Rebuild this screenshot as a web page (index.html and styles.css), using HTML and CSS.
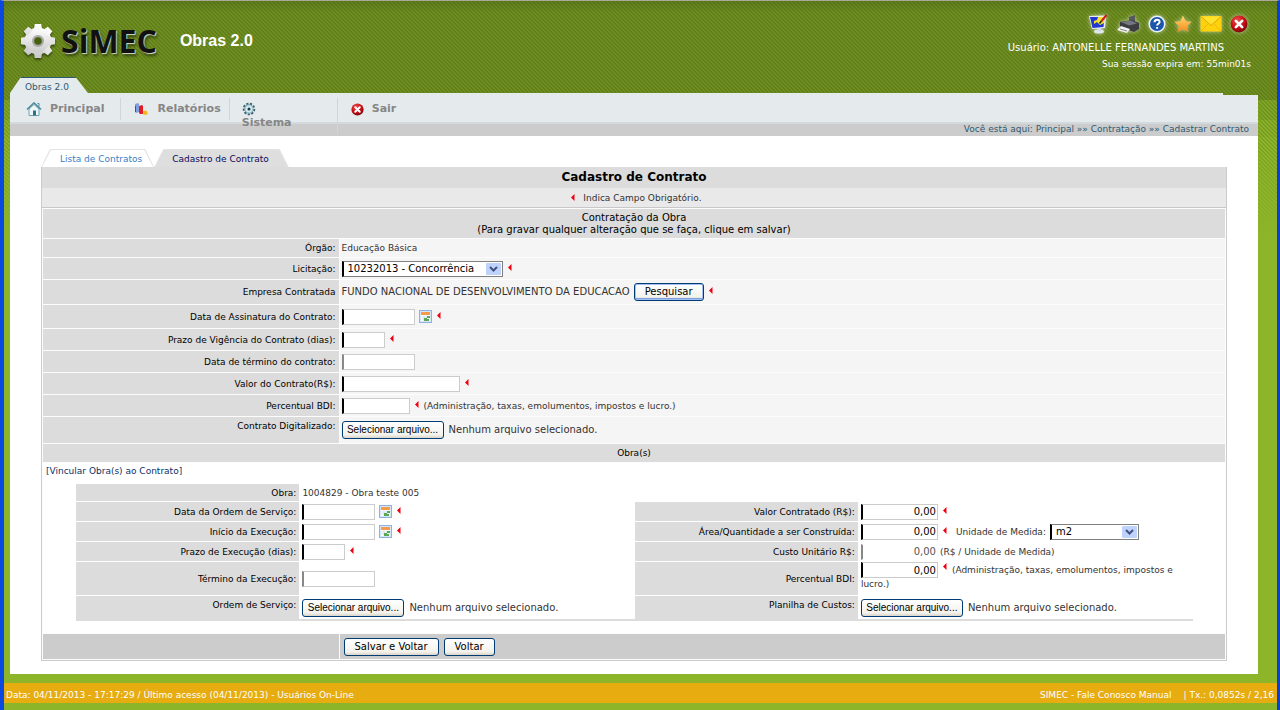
FILE: index.html
```html
<!DOCTYPE html>
<html lang="pt-BR">
<head>
<meta charset="utf-8">
<title>SIMEC - Cadastro de Contrato</title>
<link rel="stylesheet" href="styles.css">
</head>
<body>
<svg class="defs" aria-hidden="true">
  <defs>
    <radialGradient id="redball" cx=".4" cy=".3" r=".7"><stop offset="0" stop-color="#f05050"/><stop offset=".6" stop-color="#c80f14"/><stop offset="1" stop-color="#7d0508"/></radialGradient>
    <linearGradient id="silver" x1="0" y1="0" x2="0" y2="1"><stop offset="0" stop-color="#ffffff"/><stop offset="1" stop-color="#c8c8c8"/></linearGradient>
    <linearGradient id="gold" x1="0" y1="0" x2="0" y2="1"><stop offset="0" stop-color="#ffd968"/><stop offset="1" stop-color="#f58a1c"/></linearGradient>
    <symbol id="req" viewBox="0 0 4 7"><path d="M3.5 0 0 3.5 3.5 7z" fill="#f00010"/></symbol>
    <symbol id="close" viewBox="0 0 16 16"><circle cx="8" cy="8" r="7.5" fill="url(#redball)"/><path d="M5.2 5.2l5.6 5.6M10.8 5.2l-5.6 5.6" stroke="#fff" stroke-width="2.4" stroke-linecap="round"/></symbol>
    <symbol id="cal" viewBox="0 0 13 13"><path d="M0 0h13v13H0z" fill="#8fb3e0"/><path d="M1 1h11v11H1z" fill="#d6e5f7"/><path d="M2 2h9v3H2z" fill="#f69a4c"/><path d="M2 5h9v6H2z" fill="#fff"/><path d="M2 7h9M2 9h9M5 5v6M8 5v6" stroke="#c3d3e6" stroke-width=".6"/><path d="M8 6h3v2H8zM5 8h3v3H5zM8 9h2v2H8z" fill="#5aa84f"/></symbol>
  </defs>
</svg>
<div class="window">
  <header class="top">
    <div class="brand">
      <svg class="gear" viewBox="0 0 36 36" aria-hidden="true"><g fill="url(#silver)"><circle cx="18" cy="18" r="13.5"/><path d="M14.8 1h6.4l1 6h-8.4zM14.8 35h6.4l1-6h-8.4zM1 14.8v6.4l6 1v-8.4zM35 14.8v6.4l-6 1v-8.4z"/><path transform="rotate(45 18 18)" d="M14.8 1h6.4l1 6h-8.4zM14.8 35h6.4l1-6h-8.4zM1 14.8v6.4l6 1v-8.4zM35 14.8v6.4l-6 1v-8.4z"/></g><circle cx="18" cy="18" r="6" fill="#a9a9a9"/><circle cx="18" cy="18" r="3.8" fill="#47600f"/></svg>
      <span class="logo">SiMEC</span>
      <h1 class="system">Obras 2.0</h1>
    </div>
    <div class="session">
      <div class="tools">
        <a href="#" title="Tema"><svg width="20" height="20" viewBox="0 0 20 20"><ellipse cx="11" cy="17.500" rx="5" ry="2" fill="#dfe6ee"/><path d="M9 13h4v4H9z" fill="#cfd8e4"/><path d="M1 2l17-.5-1 12.500L4 15z" fill="#e8ecf4"/><path d="M2 3h14.500l-1 10L4.500 14z" fill="#2038cf"/><path d="M10 3h6.500l-.5 6-4 2-3-3-3 2V7l3-1z" fill="#f3e22c"/><path d="M18.500 1l-5 6" stroke="#d3181d" stroke-width="2"/><path d="M13.500 7l-2 2.500" stroke="#222" stroke-width="1.500"/></svg></a>
        <a href="#" title="Imprimir"><svg width="24" height="20" viewBox="0 0 24 20"><path d="M13 3l6-2v9l-6-1z" fill="#55585d"/><path d="M4 8l12-2 7 3v6l-5 3L4 13z" fill="#3b3d41"/><path d="M5 8l10-1.500 6 3-8 2z" fill="#74787e"/><path d="M5 12l9 3-3 4-10-3z" fill="#f1f1f1"/><path d="M4 15l7 2" stroke="#888"/></svg></a>
        <a href="#" title="Ajuda"><svg width="18" height="18" viewBox="0 0 18 18"><circle cx="9" cy="9" r="8.500" fill="#eaf1fb"/><circle cx="9" cy="9" r="7" fill="#1b56a8"/><path d="M6.500 7.200c0-3.500 5.300-3.300 5.100-.2-.1 1.700-2.400 1.800-2.500 3.500M9.100 12v1.800" fill="none" stroke="#fff" stroke-width="2"/></svg></a>
        <a href="#" title="Favoritos"><svg width="18" height="18" viewBox="0 0 18 18"><path d="M9 .5l2.600 5.700 6.100.6-4.600 4.100 1.400 6.300L9 14l-5.500 3.200 1.400-6.300L.3 6.800l6.100-.6z" fill="url(#gold)"/></svg></a>
        <a href="#" title="Mensagens"><svg width="22" height="18" viewBox="0 0 22 18"><path d="M.5 1h21v15.500H.5z" fill="#ffd20c"/><path d="M1 1.500l10 9 10-9" fill="#ffe22d" stroke="#e3a708"/><path d="M1 16l7-7M21 16l-7-7" stroke="#f2b90b"/></svg></a>
        <a href="#" title="Sair"><svg width="18" height="18"><use href="#close"/></svg></a>
      </div>
      <p class="user">Usuário: ANTONELLE FERNANDES MARTINS</p>
      <p class="expires">Sua sessão expira em: 55min01s</p>
    </div>
  </header>
  <div class="module"><a href="#" class="module-tab">Obras 2.0</a></div>
  <div class="page">
    <nav class="menu">
      <a href="#" class="item"><svg width="16" height="15" viewBox="0 0 16 15"><path d="M1 7.500L8 1l7 6.500" fill="none" stroke="#4a8a9c" stroke-width="1.600"/><path d="M3 7l5-4.500L13 7v6.500H3z" fill="#eef6f8" stroke="#6fa3b0"/><path d="M7 8.500h3v5H7z" fill="#2d7288"/><path d="M11.500 1.500h1.500v3" fill="none" stroke="#4a8a9c"/></svg>Principal</a>
      <a href="#" class="item reports"><svg width="14" height="14" viewBox="0 0 14 14"><path d="M1 2l3-1 1 1v8l-3 1-1-1z" fill="#7d9fe4"/><path d="M5 4l3-1 1 1v8l-3 0-1-1z" fill="#e21b24"/><path d="M9 9l3-.5 1.500 1.500v2.500l-4 .5z" fill="#f7b51c"/><path d="M1.500 4v6" stroke="#2e52c5"/></svg>Relatórios</a>
      <a href="#" class="item tall"><svg width="14" height="14" viewBox="0 0 14 14"><circle cx="7" cy="7" r="5.300" fill="#d8ecf1" stroke="#41616b" stroke-width="2" stroke-dasharray="2.200 1.400"/><circle cx="7" cy="7" r="4.200" fill="#d3eaf0" stroke="#6e9fae"/><circle cx="7" cy="7" r="1.500" fill="#25393f"/></svg><span>Sistema</span></a>
      <a href="#" class="item exit"><svg width="13" height="13"><use href="#close"/></svg>Sair</a>
      <p class="crumbs">Você está aqui: Principal »» Contratação »» Cadastrar Contrato</p>
    </nav>
    <main class="content">
      <div class="tabs">
        <a href="#" class="tab">Lista de Contratos</a>
        <a href="#" class="tab active">Cadastro de Contrato</a>
      </div>
      <form class="sheet">
        <h2 class="title">Cadastro de Contrato</h2>
        <p class="hint"><svg class="req"><use href="#req"/></svg> Indica Campo Obrigatório.</p>
        <div class="grid">
          <div class="band intro">Contratação da Obra<br>(Para gravar qualquer alteração que se faça, clique em salvar)</div>
          <div class="row"><span class="lab">Órgão:</span><div class="val">Educação Básica</div></div>
          <div class="row h21"><label class="lab" for="lic">Licitação:</label><div class="val"><select id="lic" class="must w161"><option>10232013 - Concorrência</option></select><svg class="req"><use href="#req"/></svg></div></div>
          <div class="row h24"><span class="lab">Empresa Contratada</span><div class="val big">FUNDO NACIONAL DE DESENVOLVIMENTO DA EDUCACAO<button type="button" class="btn focus">Pesquisar</button><svg class="req"><use href="#req"/></svg></div></div>
          <div class="row h23"><label class="lab" for="ass">Data de Assinatura do Contrato:</label><div class="val"><input id="ass" class="must w73"><svg class="cal"><use href="#cal"/></svg><svg class="req"><use href="#req"/></svg></div></div>
          <div class="row h21"><label class="lab" for="vig">Prazo de Vigência do Contrato (dias):</label><div class="val"><input id="vig" class="must w43"><svg class="req"><use href="#req"/></svg></div></div>
          <div class="row h21"><label class="lab" for="ter">Data de término do contrato:</label><div class="val"><input id="ter" class="w73"></div></div>
          <div class="row h21"><label class="lab" for="valc">Valor do Contrato(R$):</label><div class="val"><input id="valc" class="must w118"><svg class="req"><use href="#req"/></svg></div></div>
          <div class="row h21"><label class="lab" for="bdi">Percentual BDI:</label><div class="val"><input id="bdi" class="must w68"><svg class="req"><use href="#req"/></svg>(Administração, taxas, emolumentos, impostos e lucro.)</div></div>
          <div class="row h26 toplab"><span class="lab">Contrato Digitalizado:</span><div class="val"><button type="button" class="btn file">Selecionar arquivo...</button><span class="none">Nenhum arquivo selecionado.</span></div></div>
          <div class="band">Obra(s)</div>
          <div class="works">
            <a href="#" class="link">[Vincular Obra(s) ao Contrato]</a>
            <div class="work">
              <div class="row whole"><span class="lab">Obra:</span><div class="val">1004829 - Obra teste 005</div></div>
              <div class="row"><label class="lab" for="os">Data da Ordem de Serviço:</label><div class="val"><input id="os" class="must w73"><svg class="cal"><use href="#cal"/></svg><svg class="req"><use href="#req"/></svg></div></div>
              <div class="row"><label class="lab" for="vc">Valor Contratado (R$):</label><div class="val"><input id="vc" class="must w77" value="0,00"><svg class="req"><use href="#req"/></svg></div></div>
              <div class="row"><label class="lab" for="ini">Início da Execução:</label><div class="val"><input id="ini" class="must w73"><svg class="cal"><use href="#cal"/></svg><svg class="req"><use href="#req"/></svg></div></div>
              <div class="row"><label class="lab" for="area">Área/Quantidade a ser Construída:</label><div class="val"><input id="area" class="must w77" value="0,00"><svg class="req"><use href="#req"/></svg><label class="unit" for="um">Unidade de Medida:</label><select id="um" class="must w89"><option>m2</option></select></div></div>
              <div class="row"><label class="lab" for="pe">Prazo de Execução (dias):</label><div class="val"><input id="pe" class="must w43"><svg class="req"><use href="#req"/></svg></div></div>
              <div class="row"><label class="lab" for="cu">Custo Unitário R$:</label><div class="val"><input id="cu" class="plain w77" value="0,00" readonly>(R$ / Unidade de Medida)</div></div>
              <div class="row h33"><label class="lab" for="te">Término da Execução:</label><div class="val"><input id="te" class="w73"></div></div>
              <div class="row h33"><label class="lab" for="pb">Percentual BDI:</label><div class="val block"><input id="pb" class="must w77" value="0,00"><svg class="req"><use href="#req"/></svg>(Administração, taxas, emolumentos, impostos e lucro.)</div></div>
              <div class="row h23 toplab"><span class="lab">Ordem de Serviço:</span><div class="val"><button type="button" class="btn file">Selecionar arquivo...</button><span class="none">Nenhum arquivo selecionado.</span></div></div>
              <div class="row h23 toplab"><span class="lab">Planilha de Custos:</span><div class="val"><button type="button" class="btn file">Selecionar arquivo...</button><span class="none">Nenhum arquivo selecionado.</span></div></div>
            </div>
          </div>
          <div class="row actions"><span class="lab"></span><div class="val"><button type="submit" class="btn">Salvar e Voltar</button><button type="button" class="btn">Voltar</button></div></div>
        </div>
      </form>
    </main>
  </div>
  <footer class="foot"><span>Data: 04/11/2013 - 17:17:29 / Último acesso (04/11/2013) - Usuários On-Line</span><span class="right">SIMEC - Fale Conosco Manual</span><span>| Tx.: 0,0852s / 2,16</span></footer>
</div>
</body>
</html>
```
FILE: styles.css
```css
* { box-sizing: border-box; }
body { margin: 0; font: 9px/12px Verdana, "DejaVu Sans", sans-serif; color: #333; background: #8db529; }
h1, h2, p { margin: 0; }
a { text-decoration: none; color: inherit; }
.defs { position: absolute; width: 0; height: 0; }
.window {
  position: relative; z-index: 0;
  min-height: 100vh; display: flex; flex-direction: column;
  border-top: 1px solid #aca899; border-left: 4px solid #0a48e0; border-right: 3px solid #0a3fd8;
  background: linear-gradient(#5f7f1c 0, #6e8f20 12px, #6e8f20 99px, #7fa524 99px, #7fa524 119px, #89b027 119px, #89b027 136px, #8db529 136px);
}
.window::before {
  content: ""; position: absolute; z-index: -1; inset: 0 0 auto; height: 240px;
  background: url("data:image/svg+xml,%3Csvg xmlns='http://www.w3.org/2000/svg' width='4' height='4' shape-rendering='crispEdges'%3E%3Cpath d='M0 0h1v1H0zM1 1h1v1H1zM2 2h1v1H2zM3 3h1v1H3z' fill='%23000' fill-opacity='.14'/%3E%3Cpath d='M1 0h1v1H1zM2 1h1v1H2zM3 2h1v1H3zM0 3h1v1H0z' fill='%23000' fill-opacity='.07'/%3E%3C/svg%3E");
  -webkit-mask: linear-gradient(#000 60%, transparent); mask: linear-gradient(#000 60%, transparent);
}
.top { display: flex; justify-content: space-between; min-height: 76px; padding: 12px 26px 0 16px; color: #fff; }
.brand { display: flex; align-items: center; height: 56px; }
.gear { width: 36px; height: 36px; filter: drop-shadow(0 2px 1px rgba(0,0,0,.45)); }
.logo { margin-left: 5px; font: bold 32px/40px "Open Sans", sans-serif; color: #111; text-shadow: 1px 1px 1px #d8dfc4, 2px 3px 3px rgba(0,0,0,.5); }
.system { margin-left: 23px; font: bold 16px/20px "Liberation Sans", Arial, sans-serif; }
.session { display: flex; flex-direction: column; align-items: flex-end; }
.tools { display: flex; align-items: center; gap: 8px; height: 22px; margin-right: 3px; }
.tools a { display: flex; }
.tools svg { filter: drop-shadow(0 0 2px rgba(255,255,255,.6)); }
.user { margin: 7px 27px 4px 0; font-size: 10px; }
.module { padding-left: 6px; }
.module::after { content: ""; display: block; height: 2px; margin-right: 54px; background: #e5eaed; }
.module-tab {
  display: block; width: 78px; padding: 3px 15px 1px; height: 16px; font-size: 9px; white-space: nowrap; color: #2c5a72;
  background: #e5eaed; clip-path: polygon(14% 0, 84% 0, 100% 100%, 0 100%); border-top: 1px solid #2c5a72;
}
.page { flex: 1; display: flex; flex-direction: column; margin: 0 19px 9px 6px; background: #fff; }
.menu {
  display: flex; align-items: flex-start; min-height: 41px; padding-left: 16px;
  background: linear-gradient(#e5eaed 0 27px, #d3dadd 27px 29px, #ccc 29px);
  font: bold 11px/14px Verdana, "DejaVu Sans", sans-serif; color: #868686;
}
.item { display: flex; align-items: center; gap: 8px; margin-top: 3px; height: 22px; padding-right: 16px; border-right: 1px solid #cdd6d9; }
.reports { padding: 0 8px 0 13px; gap: 9px; }
.tall { flex-direction: column; align-items: flex-start; gap: 0; width: 108px; height: 36px; padding: 4px 0 0 12px; }
.exit { border: 0; padding-left: 13px; }
.crumbs { margin: 27px 9px 0 auto; font-weight: normal; font-size: 9px; line-height: 14px; color: #2c5a72; }
.content { padding: 13px 31px; flex: 1; }
.tabs { display: flex; }
.tab { position: relative; z-index: 0; height: 18px; padding: 4px 12px 0 19px; color: #3a80c5; }
.tab::before, .tab::after { content: ""; position: absolute; z-index: -1; inset: 0; clip-path: polygon(9px 0, calc(100% - 9px) 0, 100% 100%, 0 100%); background: #e4e4e4; }
.tab::after { inset: 1px 1px 0; background: #fff; }
.active { padding: 4px 20px 0 18px; color: #0a0a5a; }
.active::after { background: #dedede; }
.sheet { border: 1px solid #ccc; border-top: 0; color: #333; }
.title { background: #dcdcdc; font: bold 12px/21px Verdana, "DejaVu Sans", sans-serif; text-align: center; color: #000; }
.hint { background: #e9e9e9; height: 20px; padding-top: 4px; text-align: center; border-bottom: 1px solid #c8c8c8; }
.req { width: 4px; height: 7px; flex: none; margin: 0 5px; }
.val .req { margin-bottom: 3px; }
.grid { display: flex; flex-direction: column; gap: 1px; padding: 1px; background: #fcfcfc; }
.band { background: #dcdcdc; text-align: center; padding: 3px; color: #000; }
.intro { font-size: 10px; padding: 3px 3px 2px; }
.row { display: flex; gap: 1px; min-height: 18px; }
.lab { flex: none; width: 25%; display: flex; align-items: center; justify-content: flex-end; background: #dcdcdc; padding: 0 3px; color: #000; text-align: right; }
.toplab > .lab { align-items: flex-start; padding-top: 3px; }
.val { flex: 1; display: flex; align-items: center; background: #f5f5f5; padding-left: 2px; }
.big { font-size: 10px; }
.h21 { min-height: 21px; }
.h23 { min-height: 23px; }
.h24 { min-height: 24px; }
.h26 { min-height: 26px; }
input { height: 16px; padding: 0 1px; font: 10px/12px Verdana, "DejaVu Sans", sans-serif; text-align: right; border: 1px solid #ccc; border-left: 2px solid #888; background: #fff; color: #000; border-radius: 0; }
select { height: 16px; padding: 0 5px 0 4px; font: 10px/12px Verdana, "DejaVu Sans", sans-serif; color: #000; border: 1px solid #808080; border-radius: 0; appearance: none;
  background: #fff url("data:image/svg+xml,%3Csvg xmlns='http://www.w3.org/2000/svg' width='15' height='12'%3E%3Crect width='15' height='12' rx='1' fill='%23bfd2fb'/%3E%3Cpath d='M4 4l3.500 3.500L11 4' fill='none' stroke='%23405080' stroke-width='2'/%3E%3C/svg%3E") right 1px center no-repeat; }
.must { border-left: 2px solid #000; }
.plain { margin-right: 2px; border-color: transparent; border-left: 2px solid #888; color: #555; }
.w43 { width: 43px; }
.w68 { width: 68px; }
.w73 { width: 73px; }
.w77 { width: 77px; }
.w89 { width: 89px; }
.w118 { width: 118px; }
.w161 { width: 161px; }
.cal { width: 13px; height: 13px; margin-left: 4px; }
.btn { height: 18px; padding: 0 10px; font: 10px/12px Verdana, "DejaVu Sans", sans-serif; color: #000; border: 1px solid #003c74; border-radius: 3px; background: linear-gradient(#fff, #f3f2ec 80%, #d9d4c8); white-space: nowrap; }
.btn.focus { margin-left: 4px; box-shadow: inset 0 0 0 1px #a3bff2, inset 0 -2px 0 #7f9fe0; }
.file { width: 102px; padding: 0; font: 10px/12px "Liberation Sans", Arial, sans-serif; }
.none { margin-left: 5px; font-size: 10px; }
.works { background: #fff; padding: 2px 32px 12px 33px; }
.link { display: block; margin: 0 0 7px -30px; color: #0c2f68; }
.work { display: grid; grid-template-columns: 1fr 1fr; row-gap: 1px; border-bottom: 2px solid #dcdcdc; }
.work .row { min-height: 19px; }
.work .whole { min-height: 17px; }
.work .whole + .row { grid-column: 1; }
.work .lab { width: 40%; }
.work .val { background: #fff; }
.work .h33 { min-height: 33px; }
.work .h23 { min-height: 23px; }
.work .block { display: block; }
.block input { vertical-align: middle; }
.unit { margin: 0 4px; }
.actions .lab, .actions .val { background: #ccc; min-height: 25px; }
.actions .val { gap: 5px; padding-left: 4px; }
.foot { display: flex; margin-bottom: 7px; padding: 6px 3px 2px 2px; background: #e6ac10; color: #fff; white-space: nowrap; }
.right { margin: 0 12px 0 auto; }
```
